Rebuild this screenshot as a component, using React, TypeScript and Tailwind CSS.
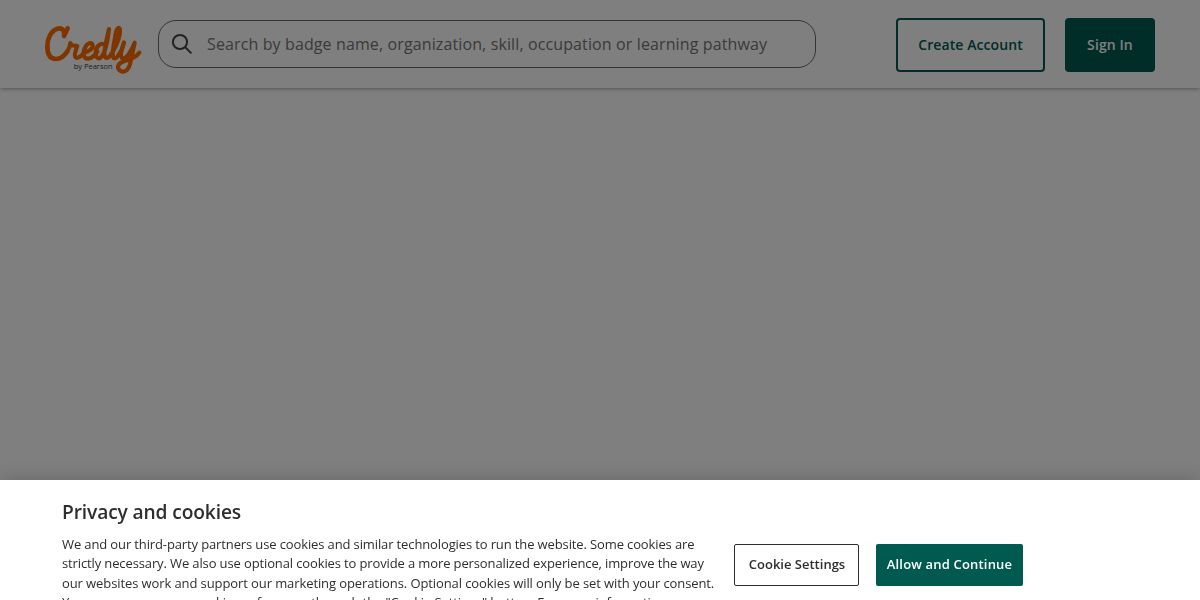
import { useState } from 'react';

function CredlyLogo() {
  return (
    <svg viewBox="0 0 345 192" className="w-[115px] h-16 shrink-0" role="img" aria-label="Credly by Pearson">
      <g fill="none" stroke="#ff6b00" strokeWidth="12.5" strokeLinecap="round" strokeLinejoin="round">
        {/* C */}
        <path
          strokeWidth="14"
          d="M95 37 L84 60 C87 42 77 34 64 38 C45 44 34 67 34 91 C34 115 43 129 60 129 C75 129 86 119 94 106"
        />
        {/* r */}
        <path d="M94 106 C99 98 102 90 103 81 C106 91 114 89 124 90 C121 101 113 114 118 123 C124 131 138 118 146 109" />
        {/* e */}
        <path d="M146 109 C158 107 171 99 170 88 C167 77 154 81 148 93 C139 110 142 129 157 128 C169 127 177 118 184 107" />
        {/* d */}
        <path d="M207 87 C195 77 180 91 179 108 C178 128 190 132 198 120 C208 107 215 74 219 39 C213 65 205 97 205 114 C206 132 217 128 227 113" />
        {/* l */}
        <path d="M227 113 C240 91 253 60 252 43 C251 31 242 34 239 54 C234 81 227 112 231 123 C236 135 250 118 258 98 L264 80" />
        {/* y */}
        <path d="M264 80 C257 100 251 122 259 127 C270 131 285 108 296 80 C291 105 286 130 281 148 C275 166 260 171 251 163 C240 153 248 141 264 136 C286 130 301 124 310 110" />
      </g>
      <text
        x="113"
        y="159"
        fill="#3c3c3c"
        fontSize="20"
        fontFamily="Open Sans, sans-serif"
        textLength="117"
        lengthAdjust="spacingAndGlyphs"
      >
        by Pearson
      </text>
    </svg>
  );
}

function SearchBar() {
  const [query, setQuery] = useState('');

  return (
    <form
      role="search"
      onSubmit={(e) => e.preventDefault()}
      className="ml-[7px] w-[658px] h-12 flex items-center border border-[#6a6a6a] rounded-[18px] pl-3 pr-4"
    >
      <svg viewBox="0 0 24 24" className="size-6 shrink-0" fill="none" stroke="#444444" strokeWidth="2">
        <circle cx="9" cy="10" r="7.1" />
        <path d="M14 15 L20.4 21.4" />
      </svg>
      <input
        value={query}
        onChange={(e) => setQuery(e.target.value)}
        placeholder="Search by badge name, organization, skill, occupation or learning pathway"
        className="ml-3 flex-1 min-w-0 h-full bg-transparent text-base tracking-[0.12px] text-[#333333] placeholder:text-[#757575] outline-none"
      />
    </form>
  );
}

function Header() {
  return (
    <header className="h-22 flex items-center bg-white pl-9 pr-[45px] shadow-[0_1px_4px_rgba(0,0,0,0.35)]">
      <div className="pt-2">
        <CredlyLogo />
      </div>
      <SearchBar />
      <div className="ml-auto flex items-center gap-5 pt-[2px]">
        <button className="w-[149px] h-[54px] rounded-[4px] border-2 border-[#005a50] text-sm font-semibold tracking-[0.08px] text-[#005a50]">
          Create Account
        </button>
        <button className="w-[90px] h-[54px] rounded-[4px] bg-[#005a50] text-sm font-semibold tracking-[0.1px] text-white">
          Sign In
        </button>
      </div>
    </header>
  );
}

function CookieBanner() {
  return (
    <section
      aria-label="Privacy and cookies"
      className="fixed inset-x-0 bottom-0 h-[120px] overflow-hidden bg-white shadow-[0_0_18px_rgba(0,0,0,0.2)] flex items-start pl-[62px]"
    >
      <div className="w-[656px] shrink-0 pt-[18px]">
        <h2 className="text-[19.2px] leading-7 font-semibold tracking-[-0.13px] text-[#2e2e2e]">Privacy and cookies</h2>
        <p className="mt-[8.6px] text-[13px] leading-[19.5px] tracking-[-0.124px] text-[#2e2e2e]">
          We and our third-party partners use cookies and similar technologies to run the website. Some cookies are
          strictly necessary. We also use optional cookies to provide a more personalized experience, improve the way{' '}
          <span className="tracking-[-0.096px]">
            our websites work and support our marketing operations. Optional cookies will only be set with your consent.
            You can manage your cookie preferences through the "Cookie Settings" button. For more information,
          </span>
        </p>
      </div>
      <div className="ml-4 mt-16 flex gap-[17px]">
        <button className="w-[125px] h-[42px] rounded-[2px] border border-[#2e2e2e] pl-[1px] text-[13px] font-semibold text-[#2e2e2e]">
          Cookie Settings
        </button>
        <button className="w-[147px] h-[42px] rounded-[2px] bg-[#005a50] text-[13px] font-semibold tracking-[0.18px] text-white">
          Allow and Continue
        </button>
      </div>
    </section>
  );
}

export default function App() {
  return (
    <div className="h-screen overflow-hidden bg-white font-['Open_Sans',sans-serif]">
      <Header />
      <div className="fixed inset-0 bg-black/50" />
      <CookieBanner />
    </div>
  );
}
